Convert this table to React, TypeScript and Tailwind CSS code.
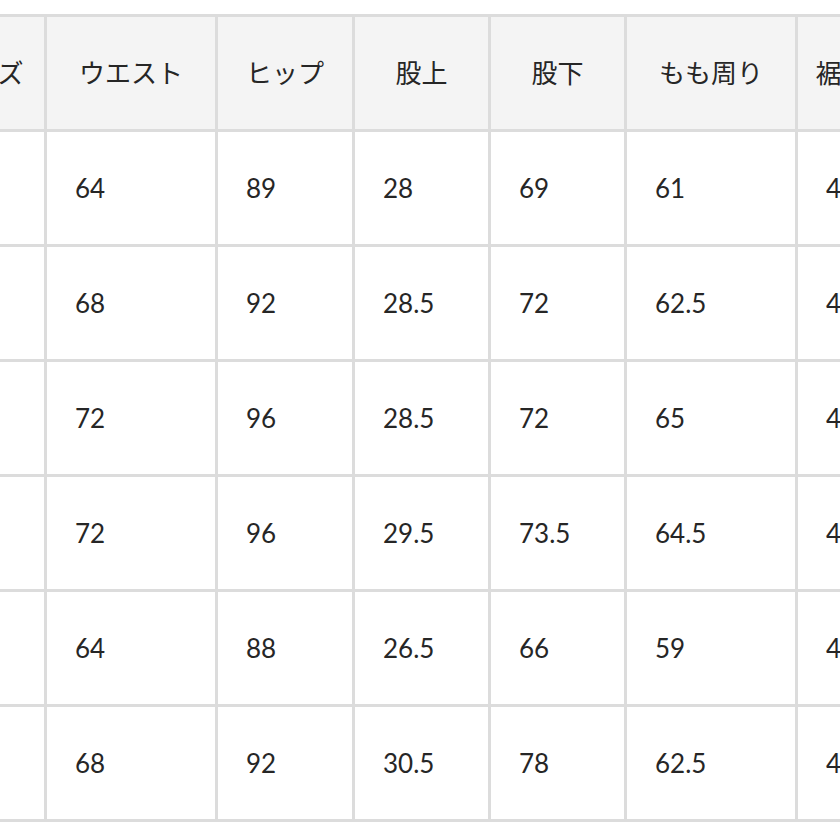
import React from 'react';

const headers = ['サイズ', 'ウエスト', 'ヒップ', '股上', '股下', 'もも周り', '裾幅'];

const rows = [
  ['S', '64', '89', '28', '69', '61', '40'],
  ['M', '68', '92', '28.5', '72', '62.5', '41'],
  ['L', '72', '96', '28.5', '72', '65', '42'],
  ['L', '72', '96', '29.5', '73.5', '64.5', '42'],
  ['S', '64', '88', '26.5', '66', '59', '40'],
  ['M', '68', '92', '30.5', '78', '62.5', '41'],
];

const widths = ['w-[121px]', 'w-[171px]', 'w-[137px]', 'w-[136px]', 'w-[136px]', 'w-[171px]', 'w-[90px]'];

export default function App() {
  return (
    <div className="w-[840px] h-[840px] overflow-hidden bg-white pt-[14px] font-['Lato','Noto_Sans_CJK_JP',sans-serif] text-[26px] text-[#262626]">
      <table className="table-fixed border-collapse ml-[-77px] w-[962px]">
        <colgroup>
          {widths.map((w, i) => (
            <col key={i} className={w} />
          ))}
        </colgroup>
        <thead>
          <tr className="h-[115px] bg-[#f4f4f4]">
            {headers.map((h) => (
              <th key={h} className="border-[3px] border-[#dcdcdc] text-center font-normal whitespace-nowrap">
                {h}
              </th>
            ))}
          </tr>
        </thead>
        <tbody>
          {rows.map((r, i) => (
            <tr key={i} className="h-[115px]">
              {r.map((v, j) => (
                <td key={j} className="border-[3px] border-[#dcdcdc] pl-[28px] text-left whitespace-nowrap">
                  {v}
                </td>
              ))}
            </tr>
          ))}
        </tbody>
      </table>
    </div>
  );
}
